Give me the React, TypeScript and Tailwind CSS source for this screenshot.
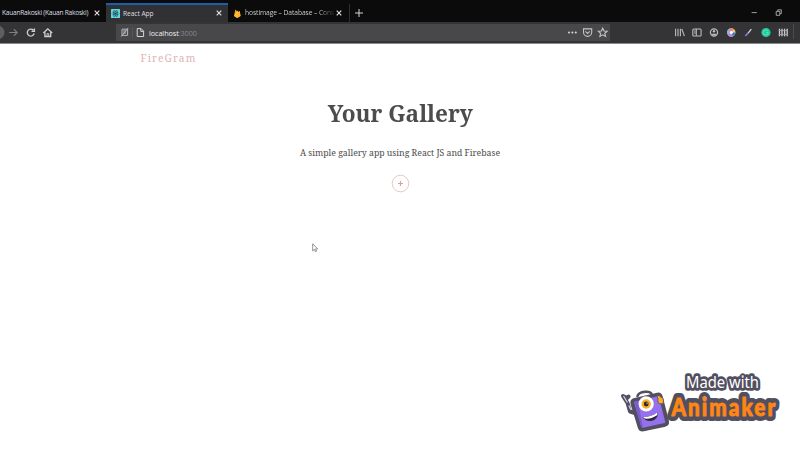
import React from "react";

const Close = () => (
  <svg className="h-[6px] w-[6px] shrink-0" viewBox="0 0 6 6" stroke="#e4e4e6" strokeWidth="1.1">
    <path d="M.7.7l4.6 4.6M5.3.7L.7 5.3" />
  </svg>
);

const ReactMark = () => (
  <svg className="h-[9px] w-[9px] shrink-0" viewBox="0 0 18 18" fill="none">
    <rect width="18" height="18" rx="1" fill="#64d6e0" />
    <g stroke="#1d5663" strokeWidth="1.2">
      <ellipse cx="9" cy="9" rx="6.8" ry="2.8" />
      <ellipse cx="9" cy="9" rx="6.8" ry="2.8" transform="rotate(60 9 9)" />
      <ellipse cx="9" cy="9" rx="6.8" ry="2.8" transform="rotate(120 9 9)" />
    </g>
    <circle cx="9" cy="9" r="1.7" fill="#173e4d" />
  </svg>
);

const Flame = () => (
  <svg className="h-[9px] w-[8px] shrink-0" viewBox="0 0 16 18">
    <path d="M2 14L4.5 1 8 4.5l1.5-1.5L11 6l2.5-2L15 14l-6.5 4z" fill="#f59a1b" />
    <path d="M2 14L8 5l3 4-9 5z" fill="#ffd04a" />
    <path d="M2 14l11.5-10L15 14l-6.5 4z" fill="#ffb52e" />
  </svg>
);

const TabBar = () => (
  <div className="flex h-[22px] bg-[#0b0b0c] text-[#dedee0]">
    <div className="flex w-[106px] items-center justify-between pt-[4px] pr-[6px] pl-[2px]">
      <span className="whitespace-nowrap text-[6.6px] tracking-[-0.25px]">KauanRakoski (Kauan Rakoski)</span>
      <Close />
    </div>
    <div className="mt-[3px] flex w-[122px] items-center border-t-2 border-[#1c5fa8] bg-[#313134] pr-[6px] pb-[1px] pl-[5px]">
      <ReactMark />
      <span className="ml-[3px] flex-1 whitespace-nowrap pt-[1px] text-[6.6px] tracking-[-0.03px]">React App</span>
      <Close />
    </div>
    <div className="mt-[4px] flex h-[18px] w-[122px] items-center border-r border-[#303032] pr-[7px] pl-[5px]">
      <Flame />
      <span className="ml-[4px] whitespace-nowrap bg-linear-to-r from-[#dedee0] from-82% to-[#2a2a2b] bg-clip-text text-[6.7px] tracking-[-0.08px] text-transparent">hostimage – Database – Cons</span>
      <span className="ml-auto flex"><Close /></span>
    </div>
    <svg className="mt-[8.5px] ml-[5px] h-[8px] w-[8px]" viewBox="0 0 8 8" stroke="#d5d5d7" strokeWidth="1"><path d="M4 0v8M0 4h8" /></svg>
    <svg className="mt-[8px] mr-[18px] ml-auto h-[9px] w-[31px]" viewBox="0 0 31 9" fill="none" stroke="#c2c2c4" strokeWidth=".8">
      <path d="M.6 4.6h5.2M25.2 3.4h3.6v3.9h-3.6zM26.8 3.2V1.8h3.5v3.8h-1.4" />
    </svg>
  </div>
);

const NavBar = () => (
  <div className="flex h-[22px] items-center border-b border-[#8a8a8c] bg-[#343437]">
    <svg className="h-[21px] w-[60px]" viewBox="0 0 60 21" fill="none" stroke="#d0d0d2" strokeWidth="1.1">
      <circle cx="-2.5" cy="10.5" r="6.6" fill="#5e5e61" stroke="#67676a" strokeWidth=".6" />
      <path d="M9.2 10.5h7.8M13.8 7.1l3.4 3.4-3.4 3.4" stroke="#808083" />
      <path d="M33.4 8.2a3.5 3.5 0 1 0 .8 3.3M34.4 6.6v2.8h-2.9" strokeWidth="1.3" />
      <path d="M43.4 10.9L47.8 6.8l4.4 4.1M44.9 10.3v4.2h5.8v-4.2" strokeWidth="1.3" />
      <path d="M47 14.3v-2.7h1.7v2.7" strokeWidth=".9" />
    </svg>
    <div className="ml-[56px] flex h-[17px] w-[494px] items-center rounded-[1px] bg-[#48484b]">
      <svg className="h-[17px] w-[30px]" viewBox="0 0 30 17" fill="none" stroke="#b8b8bb" strokeWidth="1">
        <path d="M6 5.2h5.6v6.2H6zM7.2 7h3M7.2 9h3M5.2 12.6l7-8.6" />
        <path d="M16.5 3.5v10" stroke="#5a5a5d" strokeWidth=".8" />
        <path d="M21.2 4.6h3.9l2.5 2.5v5.4h-6.4zM24.8 4.8v2.6h2.7" stroke="#d6d6d8" />
      </svg>
      <span className="ml-[3px] pt-[1px] text-[7.2px] tracking-[-0.05px] text-[#f0f0f2]">localhost<span className="text-[#87878a]">:3000</span></span>
      <svg className="mr-[2px] ml-auto h-[17px] w-[43px]" viewBox="0 0 43 17" fill="none" stroke="#c4c4c6" strokeWidth="1.1">
        <g fill="#dadadc" stroke="none"><circle cx="4" cy="8.5" r="1" /><circle cx="7.4" cy="8.5" r="1" /><circle cx="10.8" cy="8.5" r="1" /></g>
        <path d="M18.5 4.9h8.2v3.4a4.1 4.1 0 0 1-8.2 0zM20.4 7.3l2.2 2.1 2.2-2.1" />
        <path d="M37.7 4.1l1.3 2.9 3.1.3-2.3 2 .8 3.1-2.9-1.6-2.8 1.6.7-3.1-2.3-2 3.2-.3z" />
      </svg>
    </div>
    <svg className="ml-[62px] h-[21px] w-[128px]" viewBox="672 22 128 21" fill="none" stroke="#bcbcbe" strokeWidth="1.1">
      <path d="M675.6 28.8v7.4M678 28.8v7.4M680.4 28.8v7.4M681.8 29l2.6 7.1" />
      <rect x="692.8" y="29" width="8.3" height="7" rx="1" />
      <path d="M696.3 29v6.8M694 31h1.5M694 33h1.5" />
      <circle cx="714" cy="32.5" r="3.6" strokeWidth="1.2" /><circle cx="714" cy="31.3" r="1.2" fill="#bcbcbe" stroke="none" /><path d="M711.4 34h5.2q-2.6 2.8-5.2 0z" fill="#bcbcbe" strokeWidth=".5" />
      <g stroke="none">
        <circle cx="731.3" cy="32.5" r="4.2" fill="#f2d17c" />
        <path d="M731.3 32.5L727.4 34a4.2 4.2 0 0 1 1.2-4.8z" fill="#6fb9f0" />
        <path d="M731.3 32.5l-2.7-3.3a4.2 4.2 0 0 1 5.3.1z" fill="#f0837b" />
        <path d="M731.3 32.5l1.5 3.7a4.2 4.2 0 0 1-5.4-2.2z" fill="#be83ea" />
        <path d="M731.3 32.5h4.2a4 4 0 0 1-2.7 3.7z" fill="#3d79d9" />
        <circle cx="731.3" cy="32.5" r="1.5" fill="#fff" />
      </g>
      <path d="M745.3 36l3.2-3.4" stroke="#7881c4" strokeWidth="1.8" /><path d="M748.3 32.8l3-3.7" stroke="#d0d3e7" strokeWidth="1.3" />
      <circle cx="766" cy="32.5" r="4.6" fill="#20c99b" stroke="none" />
      <path d="M768 31a2.5 2.5 0 1 0 .2 2.5v-.8H766" stroke="#84e9cf" strokeWidth=".7" />
      <path d="M779.5 28.8v7.5M782 28.8v7.5M784.6 28.8v7.5M787.2 28.8v7.5" stroke="#cdcdcf" strokeWidth="1.3" />
      <path d="M778.7 30.5h9.3M778.7 34.5h9.3" stroke="#a5a5a7" strokeWidth=".8" />
      <path d="M793.5 24v15" stroke="#4b4b4e" />
    </svg>
  </div>
);

const Watermark = () => (
  <svg className="absolute top-[365px] left-[615px] h-[75px] w-[170px]" viewBox="615 365 170 75">
    <g stroke="#514f60" strokeLinejoin="round" strokeLinecap="round">
      <path d="M635 413l-5-1.5-2.5-8.5-4.5-7 4 2 1.5-1.5" fill="none" strokeWidth="4" />
      <path d="M623.8 396.5l3.3 5.5M629 406l1.8 3.5" fill="none" stroke="#d5d1e5" strokeWidth="1.2" />
      <path d="M637.5 396q1-3.5 7.5-4.2 5-.6 6.5 2" fill="none" strokeWidth="2.6" />
      <path d="M634 400L657.5 394.5q2.5-.5 3.3 2.2l6.2 24.3q.7 3-2 3.8l-21.5 4.7q-2.8.5-3.8-2l-7.2-23.5q-.8-3.2 1.5-4z" fill="#9671ed" strokeWidth="3.8" />
    </g>
    <path d="M634 401.5l7.2 25.3 1.8.9-5.2-27z" fill="#7d5bce" />
    <circle cx="646.2" cy="403.8" r="7.6" fill="#fff" />
    <circle cx="646.2" cy="404" r="4.7" fill="#f4b128" />
    <circle cx="646.2" cy="404" r="2.4" fill="#3c2528" />
    <circle cx="647.1" cy="403.1" r=".7" fill="#fff" />
    <path d="M642.5 417q8.500 .5 15.200-4.700 .6 7.500-6.500 8.600-5.700.7-8.700-3.900z" fill="#302c3c" />
    <path d="M643 417q8.200.300 14.200-4.400l.1 2.400q-5.800 4.300-12.600 3.600z" fill="#fff" />
    <path d="M658 399q-1.500-3 .3-3.400t2 1.200l2.400.9q1.800 3.800 0 6.200l-3.600-.3q-2-2-1.100-4.600z" fill="#ffad24" stroke="#514f60" strokeWidth=".8" />
    <text x="686" y="388" textLength="73" lengthAdjust="spacingAndGlyphs" fill="#fff" stroke="#514f60" strokeWidth="5.4" strokeLinejoin="round" paintOrder="stroke" fontFamily="'Noto Sans', sans-serif" fontSize="16.3">Made with</text>
    <g transform="translate(671.5 416) scale(.83 1)" fontFamily="Lato, sans-serif" fontWeight="900" fontSize="25" strokeLinejoin="round">
      <text textLength="125" lengthAdjust="spacing" fill="#514f60" stroke="#514f60" strokeWidth="10">Animaker</text>
      <text textLength="125" lengthAdjust="spacing" fill="#ff8614" stroke="#ff8614" strokeWidth=".9">Animaker</text>
    </g>
  </svg>
);

export default function App() {
  return (
    <div className="relative h-[450px] w-[800px] overflow-hidden bg-white font-['Open_Sans','Noto_Sans',sans-serif]">
      <TabBar />
      <NavBar />
      <main className="flex flex-col font-['Noto_Serif','DejaVu_Serif_Condensed','DejaVu_Serif',serif]">
        <div className="mt-[7px] ml-[140.5px] h-[14px] text-[10.2px] leading-[14px] tracking-[1.15px] text-[#dfb4b2]">FireGram</div>
        <section className="flex flex-col items-center text-[#4c4c4c]">
          <h1 className="mt-[30px] h-[36px] scale-x-[.94] whitespace-nowrap text-[24px] leading-[36px] font-bold">Your Gallery</h1>
          <p className="mt-[15px] h-[14px] whitespace-nowrap text-[8.7px] leading-[14px]">A simple gallery app using React JS and Firebase</p>
          <svg className="mt-[14px] h-[19px] w-[19px]" viewBox="0 0 19 19" fill="none" stroke="#e5bfc0">
            <circle cx="9.5" cy="9.5" r="8.3" strokeWidth=".9" />
            <path d="M9.500 7v5M7 9.500h5" stroke="#d9a0a5" strokeWidth="1.2" />
          </svg>
        </section>
      </main>
      <svg className="absolute top-[243px] left-[312px] h-[10px] w-[7px]" viewBox="0 0 7 10">
        <path d="M.7.8v7.1l1.7-1.5 1 2.3 1.2-.5-1-2.3h2.1z" fill="#fff" stroke="#777" strokeWidth=".8" />
      </svg>
      <Watermark />
    </div>
  );
}
